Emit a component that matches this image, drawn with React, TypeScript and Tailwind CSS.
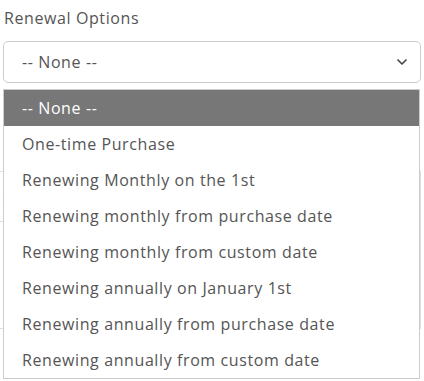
import { ChevronDown } from "lucide-react";

const options = [
  "-- None --",
  "One-time Purchase",
  "Renewing Monthly on the 1st",
  "Renewing monthly from purchase date",
  "Renewing monthly from custom date",
  "Renewing annually on January 1st",
  "Renewing annually from purchase date",
  "Renewing annually from custom date",
];

export default function App() {
  return (
    <div
      className="relative w-[424px] h-[381px] bg-white overflow-hidden text-[#555] tracking-[0.6px]"
      style={{ fontFamily: "'Open Sans', Lato, sans-serif" }}
    >
      <div className="pl-[4px] pt-[6px] text-[16px] leading-[24px]">Renewal Options</div>

      <div className="mx-[3px] mt-[11px] h-[42px] rounded-[5px] border border-[#ccc] flex items-center justify-between pl-[18px] pr-[10px]">
        <span className="text-[16px]">-- None --</span>
        <ChevronDown size={16} strokeWidth={2.5} className="text-[#444]" />
      </div>

      {/* content behind the open list */}
      <div className="mt-[88px] ml-[-10px] w-[431px] h-[158px] border-y border-r border-[#ddd] flex flex-col">
        <div className="h-[50px] border-b border-[#ddd] flex items-center text-[16px] pl-[1px]">n</div>
      </div>

      <ul className="absolute left-[3px] top-[89px] w-[417px] bg-white border border-[#ccc] text-[16px]">
        {options.map((o, i) => (
          <li
            key={o}
            className={
              "h-[36px] flex items-center pl-[18px] " +
              (i === 0 ? "bg-[#777] text-white" : "")
            }
          >
            {o}
          </li>
        ))}
      </ul>
    </div>
  );
}
